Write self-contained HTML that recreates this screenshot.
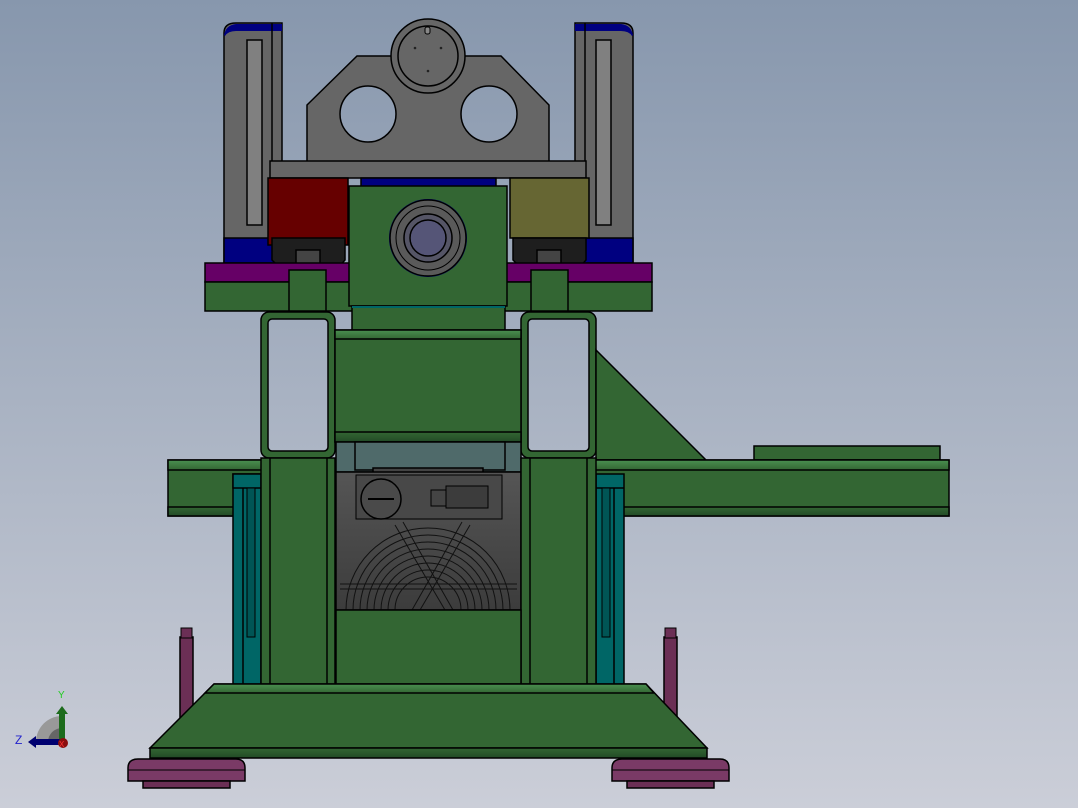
<!DOCTYPE html>
<html><head><meta charset="utf-8"><style>
html,body{margin:0;padding:0;width:1078px;height:808px;overflow:hidden}
svg{display:block}
</style></head><body>
<svg width="1078" height="808" viewBox="0 0 1078 808" xmlns="http://www.w3.org/2000/svg" stroke="#000" stroke-width="1.5">
<defs>
<linearGradient id="bg" gradientUnits="userSpaceOnUse" x1="0" y1="0" x2="0" y2="808"><stop offset="0" stop-color="#8797ad"/><stop offset="1" stop-color="#cbced8"/></linearGradient>
<linearGradient id="gl" x1="0" y1="0" x2="0" y2="1"><stop offset="0" stop-color="#4a9050"/><stop offset="1" stop-color="#336633"/></linearGradient>
<linearGradient id="gd" x1="0" y1="0" x2="0" y2="1"><stop offset="0" stop-color="#336633"/><stop offset="1" stop-color="#224a26"/></linearGradient>
<linearGradient id="mg" x1="0" y1="0" x2="0" y2="1"><stop offset="0" stop-color="#555"/><stop offset="1" stop-color="#3c3c3c"/></linearGradient>
</defs>
<rect width="1078" height="808" fill="url(#bg)" stroke="none"/>

<path d="M224 33 Q224 23 236 23 H282 V262 H224 Z" fill="#666"/>
<path d="M224 35 Q226 25 236 24 H282 V31 H236 Q228 31 225 36Z" fill="#000080" stroke="none"/>
<line x1="272" y1="23" x2="272" y2="238"/>
<rect x="247" y="40" width="15" height="185" fill="#808080"/>
<path d="M633 33 Q633 23 621 23 H575 V262 H633 Z" fill="#666"/>
<path d="M633 35 Q631 25 621 24 H575 V31 H621 Q629 31 632 36Z" fill="#000080" stroke="none"/>
<line x1="585" y1="23" x2="585" y2="238"/>
<rect x="596" y="40" width="15" height="185" fill="#808080"/>

<path d="M307 105 L357 56 H501 L549 105 V162 H307 Z" fill="#666"/>
<circle cx="368" cy="114" r="28" fill="url(#bg)"/>
<circle cx="489" cy="114" r="28" fill="url(#bg)"/>
<circle cx="428" cy="56" r="37" fill="#666"/>
<circle cx="428" cy="56" r="30" fill="#666"/>
<rect x="425" y="27" width="5" height="7" rx="2" fill="#888" stroke-width="1"/>
<circle cx="415" cy="48" r="1.3" fill="#222" stroke="none"/><circle cx="441" cy="48" r="1.3" fill="#222" stroke="none"/><circle cx="428" cy="71" r="1.3" fill="#222" stroke="none"/>

<rect x="270" y="161" width="316" height="17" fill="#666"/>
<rect x="361" y="178" width="135" height="9" fill="#000080"/>
<rect x="224" y="238" width="58" height="25" fill="#000080"/>
<rect x="575" y="238" width="58" height="25" fill="#000080"/>
<rect x="268" y="178" width="80" height="67" fill="#660000"/>
<rect x="510" y="178" width="79" height="60" fill="#666633"/>
<path d="M272 238 H345 V260 L338 268 H280 L272 260Z" fill="#1e1e1e"/>
<path d="M513 238 H586 V260 L579 268 H521 L513 260Z" fill="#1e1e1e"/>
<rect x="296" y="250" width="24" height="22" fill="#444"/>
<rect x="537" y="250" width="24" height="22" fill="#444"/>

<rect x="205" y="263" width="447" height="19" fill="#660066"/>
<rect x="205" y="282" width="447" height="29" fill="#336633"/>
<rect x="289" y="270" width="37" height="41" fill="#336633"/>
<rect x="531" y="270" width="37" height="41" fill="#336633"/>

<rect x="349" y="186" width="158" height="120" fill="#336633"/>
<circle cx="428" cy="238" r="39" fill="#000080" stroke="none"/>
<circle cx="428" cy="238" r="38" fill="#5a5a5a"/>
<circle cx="428" cy="238" r="32" fill="#5a5a5a" stroke-width="1"/>
<circle cx="428" cy="238" r="24" fill="#555566"/>
<circle cx="428" cy="238" r="18" fill="#555577"/>
<rect x="352" y="306" width="153" height="25" fill="#336633"/>
<line x1="352" y1="307" x2="505" y2="307" stroke="#006666" stroke-width="2"/>

<rect x="261" y="312" width="74" height="146" rx="8" fill="#336633"/>
<rect x="268" y="319" width="60" height="132" rx="4" fill="url(#bg)"/>
<rect x="521" y="312" width="75" height="146" rx="8" fill="#336633"/>
<rect x="528" y="319" width="61" height="132" rx="4" fill="url(#bg)"/>

<rect x="335" y="330" width="186" height="112" fill="#336633"/>
<rect x="335" y="330" width="186" height="9" fill="url(#gl)"/>
<rect x="335" y="432" width="186" height="10" fill="url(#gd)"/>

<path d="M596 350 L706 460 H596Z" fill="#336633"/>
<rect x="754" y="446" width="186" height="14" fill="#336633"/>

<rect x="168" y="460" width="781" height="56" fill="#336633"/>
<rect x="168" y="460" width="781" height="10" fill="url(#gl)"/>
<rect x="168" y="507" width="781" height="9" fill="url(#gd)"/>

<rect x="233" y="474" width="28" height="214" fill="#006666"/>
<rect x="233" y="474" width="28" height="14" fill="#006666"/>
<line x1="243" y1="488" x2="243" y2="688"/>
<rect x="247" y="488" width="8" height="149" fill="#005555" stroke-width="1"/>
<rect x="596" y="474" width="28" height="214" fill="#006666"/>
<line x1="596" y1="488" x2="624" y2="488"/>
<line x1="614" y1="488" x2="614" y2="688"/>
<rect x="602" y="488" width="8" height="149" fill="#005555" stroke-width="1"/>

<rect x="336" y="442" width="185" height="30" fill="#4f6a6a"/>
<rect x="355" y="442" width="150" height="28" fill="#4f6a6a"/>
<rect x="373" y="468" width="110" height="6" fill="#444"/>
<rect x="336" y="472" width="185" height="138" fill="url(#mg)"/>
<rect x="356" y="475" width="146" height="44" fill="#484848" stroke-width="1"/>
<circle cx="381" cy="499" r="20" fill="#4a4a4a"/>
<line x1="368" y1="499" x2="394" y2="499" stroke-width="2"/>
<rect x="431" y="490" width="18" height="16" fill="#444" stroke-width="1"/>
<rect x="446" y="486" width="42" height="22" fill="#3c3c3c" stroke-width="1"/>
<g fill="none" stroke="#111" stroke-width="1">
<path d="M346 610 A82 82 0 0 1 510 610"/><path d="M353 610 A75 75 0 0 1 503 610"/>
<path d="M360 610 A68 68 0 0 1 496 610"/><path d="M367 610 A61 61 0 0 1 489 610"/>
<path d="M374 610 A54 54 0 0 1 482 610"/><path d="M381 610 A47 47 0 0 1 475 610"/>
<path d="M388 610 A40 40 0 0 1 468 610"/><path d="M395 610 A33 33 0 0 1 461 610"/>
<path d="M395 525 L445 610 M403 522 L453 610"/><path d="M462 522 L412 610 M470 525 L420 610"/>
<path d="M340 584 H517 M340 589 H517"/>
</g>

<rect x="261" y="458" width="74" height="230" fill="#336633"/>
<line x1="270" y1="458" x2="270" y2="688"/><line x1="327" y1="458" x2="327" y2="688"/>
<rect x="521" y="458" width="75" height="230" fill="#336633"/>
<line x1="530" y1="458" x2="530" y2="688"/><line x1="587" y1="458" x2="587" y2="688"/>
<rect x="336" y="610" width="185" height="78" fill="#336633"/>

<rect x="180" y="637" width="13" height="82" fill="#6b2f55"/>
<rect x="181" y="628" width="11" height="10" fill="#6b2f55" stroke-width="1"/>
<rect x="664" y="637" width="13" height="82" fill="#6b2f55"/>
<rect x="665" y="628" width="11" height="10" fill="#6b2f55" stroke-width="1"/>

<path d="M214 684 H646 L707 748 H150Z" fill="#336633"/>
<path d="M214 684 H646 L654 693 H205Z" fill="url(#gl)"/>
<rect x="150" y="748" width="557" height="10" fill="url(#gd)"/>

<path d="M128 768 Q128 759 138 759 H236 Q245 759 245 768 V781 H128Z" fill="#7a3a66"/>
<rect x="143" y="781" width="87" height="7" fill="#6b2f55"/>
<line x1="128" y1="770" x2="245" y2="770" stroke-width="1"/>
<path d="M612 768 Q612 759 622 759 H720 Q729 759 729 768 V781 H612Z" fill="#7a3a66"/>
<rect x="627" y="781" width="87" height="7" fill="#6b2f55"/>
<line x1="612" y1="770" x2="729" y2="770" stroke-width="1"/>

<g stroke="none">
<path d="M36 742 A26 26 0 0 1 62 716 V742Z" fill="#999"/>
<path d="M48 742 A14 14 0 0 1 62 728 V742Z" fill="#666"/>
<rect x="59" y="712" width="6" height="30" fill="#1c6b1c"/><path d="M56 714 L62 706 L68 714Z" fill="#1c6b1c"/>
<rect x="34" y="739" width="28" height="6" fill="#000070"/><path d="M36 736 L28 742 L36 748Z" fill="#000070"/>
<circle cx="63" cy="743" r="5" fill="#8a0e0e"/>
<text x="58" y="698" font-family="Liberation Sans,sans-serif" font-size="10" fill="#2c2">Y</text>
<text x="15" y="744" font-family="Liberation Sans,sans-serif" font-size="12" fill="#22c">Z</text>
<text x="59" y="747" font-family="Liberation Sans,sans-serif" font-size="8" fill="#f33">X</text>
</g>
</svg>
</body></html>
